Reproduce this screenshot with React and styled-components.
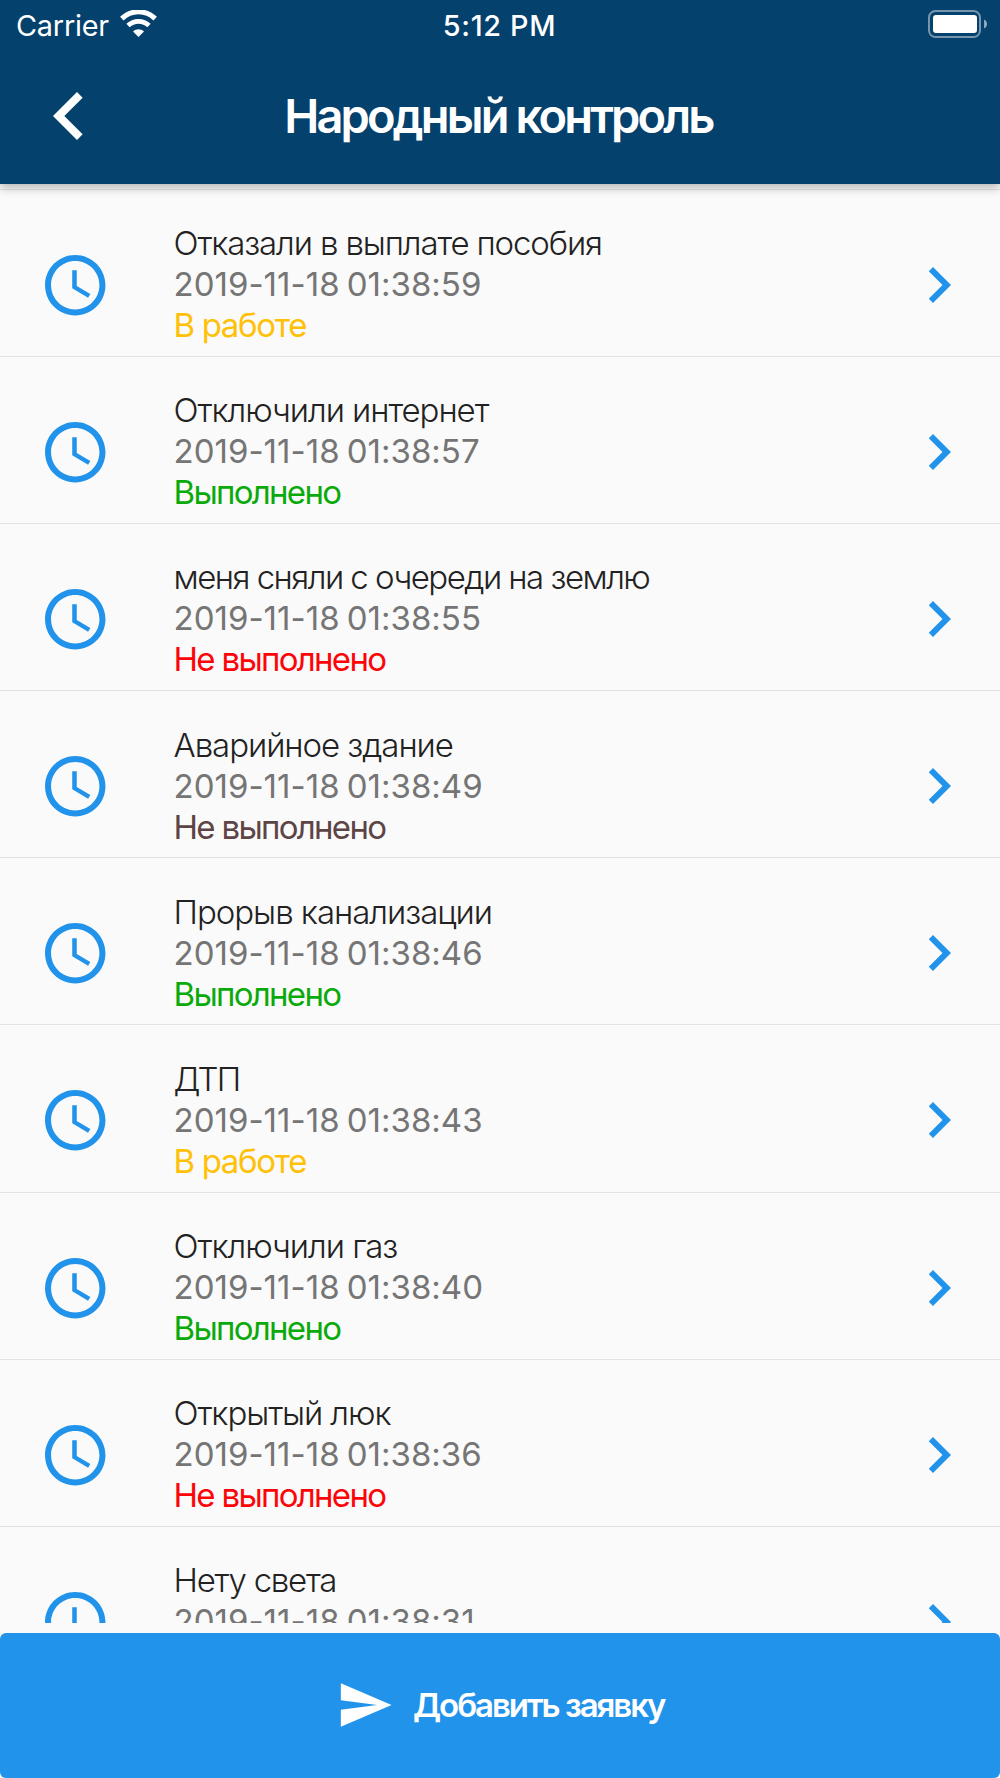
import React from 'react';
import styled, { createGlobalStyle } from 'styled-components';

const IN_WORK = { text: 'В работе', color: '#ffc107', ls: -1.35 };
const DONE = { text: 'Выполнено', color: '#0aaa0a', ls: -1.7 };
const NOT_DONE = { text: 'Не выполнено', color: '#fd0508', ls: -1.7 };
const CLOSED = { ...NOT_DONE, color: '#5d4545' };

const requests = [
  { title: 'Отказали в выплате пособия', date: '2019-11-18 01:38:59', status: IN_WORK, ls: -1.14 },
  { title: 'Отключили интернет', date: '2019-11-18 01:38:57', status: DONE, ls: -1.06 },
  { title: 'меня сняли с очереди на землю', date: '2019-11-18 01:38:55', status: NOT_DONE, ls: -1.53 },
  { title: 'Аварийное здание', date: '2019-11-18 01:38:49', status: CLOSED, ls: -1.06 },
  { title: 'Прорыв канализации', date: '2019-11-18 01:38:46', status: DONE, ls: -1.03 },
  { title: 'ДТП', date: '2019-11-18 01:38:43', status: IN_WORK, ls: -1.8 },
  { title: 'Отключили газ', date: '2019-11-18 01:38:40', status: DONE, ls: -1.05 },
  { title: 'Открытый люк', date: '2019-11-18 01:38:36', status: NOT_DONE, ls: -1.1 },
  { title: 'Нету света', date: '2019-11-18 01:38:31', ls: -1.25 },
];

function Icon({ size, path }) {
  return (
    <svg width={size} height={size} viewBox="0 0 24 24" fill="currentColor">
      <path d={path} />
    </svg>
  );
}

const CLOCK =
  'M11.99 2C6.47 2 2 6.48 2 12s4.47 10 9.99 10C17.52 22 22 17.52 22 12S17.52 2 11.99 2zM12 20c-4.42 0-8-3.58-8-8s3.58-8 8-8 8 3.58 8 8-3.58 8-8 8zm.5-13H11v6l5.25 3.15.75-1.23-4.5-2.67z';
const CHEVRON_RIGHT = 'M10 6L8.59 7.41 13.17 12l-4.58 4.59L10 18l6-6z';
const CHEVRON_LEFT = 'M15.41 7.41L14 6l-6 6 6 6 1.41-1.41L10.83 12z';
const SEND = 'M2.01 21L23 12 2.01 3 2 10l15 2-15 2z';

function App() {
  return (
    <Screen>
      <GlobalStyle />
      <Header>
        <StatusBar>
          <Carrier>
            <span>Carrier</span>
            <svg width="37" height="28" viewBox="0 0 37 28" fill="none" stroke="#fff">
              <path d="M1.8 8.6C11.3-0.5 25.7-0.5 35.2 8.6" strokeWidth="5" />
              <path d="M8 15.6C14 9.9 23 9.9 29 15.6" strokeWidth="4.8" />
              <path d="M18.5 27L13 21.4C16.2 18.4 20.8 18.4 24 21.4Z" fill="#fff" stroke="none" />
            </svg>
          </Carrier>
          <Time>5:12 PM</Time>
          <Battery>
            <svg width="60" height="28" viewBox="0 0 60 28">
              <rect x="1" y="1" width="51" height="26" rx="6.5" fill="none" stroke="#fff" strokeOpacity="0.45" strokeWidth="2" />
              <rect x="5" y="5" width="44" height="18" rx="3" fill="#fff" />
              <path d="M56 9.5C60 11 60 17 56 18.5Z" fill="#fff" fillOpacity="0.55" />
            </svg>
          </Battery>
        </StatusBar>
        <NavBar>
          <Icon size={96} path={CHEVRON_LEFT} />
          <PageTitle>Народный контроль</PageTitle>
        </NavBar>
      </Header>

      <List>
        {requests.map((item) => (
          <Row key={item.date}>
            <Icon size={72.5} path={CLOCK} />
            <Info>
              <Title $ls={item.ls}>{item.title}</Title>
              <DateText>{item.date}</DateText>
              {item.status && (
                <Status $color={item.status.color} $ls={item.status.ls}>
                  {item.status.text}
                </Status>
              )}
            </Info>
            <Icon size={72} path={CHEVRON_RIGHT} />
          </Row>
        ))}
      </List>

      <AddButton>
        <Icon size={58} path={SEND} />
        <span>Добавить заявку</span>
      </AddButton>
    </Screen>
  );
}

export default App;

const GlobalStyle = createGlobalStyle`
  * {
    box-sizing: border-box;
  }
  body {
    margin: 0;
    background: #fafafa;
    font-family: Inter, 'Liberation Sans', sans-serif;
  }
  svg {
    display: block;
    flex-shrink: 0;
  }
`;

const Screen = styled.div`
  display: flex;
  flex-direction: column;
  width: 1000px;
  height: 1778px;
  overflow: hidden;
`;

const Header = styled.header`
  height: 183.5px;
  flex-shrink: 0;
  background: #04416c;
  color: #fff;
  box-shadow: 0 3px 10px rgba(0, 0, 0, 0.3);
  z-index: 1;
`;

const StatusBar = styled.div`
  display: grid;
  grid-template-columns: 1fr auto 1fr;
  height: 50px;
  padding: 0 12px 0 16px;
  font-size: 28.8px;
  line-height: 51px;
`;

const Carrier = styled.div`
  display: flex;
  gap: 11px;
  letter-spacing: -0.2px;
  svg {
    margin-top: 10px;
  }
`;

const Time = styled.div`
  margin: 0 2px 0 -3px;
  font-weight: 500;
  letter-spacing: 0.7px;
`;

const Battery = styled.div`
  display: flex;
  justify-content: flex-end;
  padding-top: 10px;
`;

const NavBar = styled.div`
  display: grid;
  grid-template-columns: 96px 1fr 96px;
  align-items: center;
  height: 131.5px;
  padding: 0 21px;
`;

const PageTitle = styled.h1`
  margin: 0 3px 0 0;
  text-align: center;
  font-size: 47px;
  font-weight: 600;
  letter-spacing: -2.85px;
  white-space: nowrap;
`;

const List = styled.main`
  flex: 1;
  min-height: 0;
  margin: 5.2px 0 10px;
  overflow: hidden;
`;

const Row = styled.div`
  display: flex;
  height: 167.15px;
  padding: 24px 24.6px 0 39px;
  border-top: 1.4px solid #e3e3e3;
  color: #2293ea;
  > svg {
    margin-top: 35px;
  }
`;

const Info = styled.div`
  flex: 1;
  margin: 9.4px 0 0 62px;
  font-size: 33px;
  line-height: 41px;
  white-space: nowrap;
`;

const Title = styled.div`
  color: #222;
  font-weight: 300;
  letter-spacing: ${(props) => props.$ls}px;
`;

const DateText = styled.div`
  color: #757575;
  letter-spacing: 0.02px;
  word-spacing: -2.2px;
`;

const Status = styled.div`
  color: ${(props) => props.$color};
  letter-spacing: ${(props) => props.$ls}px;
`;

const AddButton = styled.button`
  display: flex;
  align-items: center;
  justify-content: center;
  gap: 19.5px;
  flex-shrink: 0;
  height: 145px;
  padding: 0 0 2px;
  border: 0;
  border-radius: 6px;
  background: #2293ea;
  color: #fff;
  font-family: inherit;
  font-size: 33px;
  font-weight: 600;
  letter-spacing: -2.05px;
`;
